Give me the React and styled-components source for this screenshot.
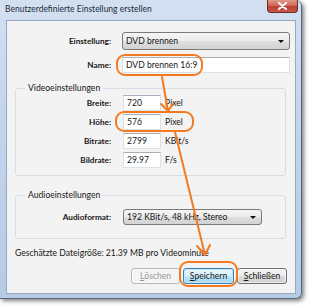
import React from 'react';
import styled, { createGlobalStyle } from 'styled-components';

const GlobalStyle = createGlobalStyle`
  html, body { margin: 0; padding: 0; background: #fff; }
  body {
    font-family: Lato, "Liberation Sans", sans-serif;
    font-size: 8.6px;
    color: #161616;
  }
`;

const Stage = styled.div`
  position: relative;
  width: 309px;
  height: 305px;
  overflow: hidden;
`;

const Window = styled.div`
  width: 302px;
  height: 299px;
  box-sizing: border-box;
  border-right: 1px solid #4f6480;
  border-bottom: 1px solid #4f6480;
  border-radius: 0 6px 6px 0;
  background: linear-gradient(180deg, #d3e0f1 0%, #c3d5eb 40%, #b7cbe5 100%);
  box-shadow: 2px 2px 4px rgba(0, 0, 0, 0.5);
  display: flex;
  flex-direction: column;
  padding: 0 5px 4px 6px;
`;

const TitleBar = styled.div`
  height: 20px;
  display: flex;
  align-items: flex-start;
  justify-content: space-between;
`;

const Title = styled.span`
  margin: 4px 0 0 -1px;
  font-size: 8.5px;
  color: #1e2a3a;
`;

const CloseButton = styled.div`
  width: 31px;
  height: 13px;
  margin-right: -2px;
  box-sizing: border-box;
  border: 1px solid #6b2a24;
  border-top: none;
  border-radius: 0 0 4px 4px;
  background: linear-gradient(180deg, #e2998c 0%, #d0685a 45%, #bb3f31 55%, #c5594b 100%);
  display: flex;
  align-items: center;
  justify-content: center;
`;

const Client = styled.div`
  flex: 1;
  box-sizing: border-box;
  border: 1px solid #94a9c4;
  background: #f3f3f3;
  padding: 11px 5px 0 8px;
  display: flex;
  flex-direction: column;
`;

const FormRow = styled.div`
  display: grid;
  grid-template-columns: ${p => p.$label || 96}px 1fr;
  column-gap: ${p => p.$gap || 11}px;
  align-items: center;
  margin-top: ${p => p.$top || 0}px;
`;

const Label = styled.span`
  text-align: right;
  font-weight: 700;
  font-size: 8.2px;
  color: #161616;
`;

const Combo = styled.div`
  height: ${p => p.$h || 18}px;
  width: ${p => (p.$w ? `${p.$w}px` : 'auto')};
  box-sizing: border-box;
  border: 1px solid #7a7a7a;
  border-radius: 3px;
  background: linear-gradient(180deg, #f5f5f5 0%, #ececec 48%, #dedede 52%, #d3d3d3 100%);
  display: flex;
  align-items: center;
  justify-content: space-between;
  padding: 0 5px 0 3px;
`;

const Caret = styled.span`
  width: 0;
  height: 0;
  border-left: 3px solid transparent;
  border-right: 3px solid transparent;
  border-top: 3px solid #111;
`;

const TextBox = styled.div`
  height: 16px;
  width: ${p => (p.$w ? `${p.$w}px` : 'auto')};
  box-sizing: border-box;
  border: 1px solid #dbe1e8;
  border-top-color: #abadb3;
  background: #fff;
  display: flex;
  align-items: center;
  padding: 0 3px;
`;

const Group = styled.fieldset`
  margin: ${p => p.$top}px 4px 0 0;
  border: 1px solid #d3dde6;
  border-radius: 3px;
  padding: ${p => p.$pad};
  display: flex;
  flex-direction: column;
  gap: 3px;
`;

const Legend = styled.legend`
  margin-left: 9px;
  padding: 0 3px;
  line-height: 10px;
  color: #161616;
`;

const FieldWithUnit = styled.div`
  display: flex;
  align-items: center;
  gap: 4px;
`;

const Info = styled.div`
  margin-top: 9px;
  line-height: 10px;
`;

const ButtonBar = styled.div`
  display: flex;
  justify-content: flex-end;
  gap: 3px;
  margin: 10px 3px 0 0;
`;

const Button = styled.div`
  width: ${p => p.$w}px;
  height: 16px;
  box-sizing: border-box;
  border-radius: 3px;
  display: flex;
  align-items: center;
  justify-content: center;
  border: 1px solid ${p => (p.$variant === 'default' ? '#3c7fb1' : p.$variant === 'disabled' ? '#b5b8bb' : '#707070')};
  color: ${p => (p.$variant === 'disabled' ? '#9a9a9a' : '#161616')};
  background: ${p =>
    p.$variant === 'default'
      ? 'linear-gradient(180deg, #eaf6fd 0%, #d9f0fc 48%, #bee6fd 52%, #a7d9f5 100%)'
      : p.$variant === 'disabled'
      ? '#f4f4f4'
      : 'linear-gradient(180deg, #f2f2f2 0%, #ebebeb 48%, #dddddd 52%, #cfcfcf 100%)'};
  box-shadow: ${p => (p.$variant === 'default' ? 'inset 0 0 0 1px #c6e6f8' : 'inset 0 0 0 1px rgba(255,255,255,0.6)')};
`;

const Overlay = styled.svg`
  position: absolute;
  inset: 0;
  pointer-events: none;
`;

const ORANGE = '#f47a22';

const videoRows = [
  { label: 'Breite:', value: '720', unit: 'Pixel' },
  { label: 'Höhe:', value: '576', unit: 'Pixel' },
  { label: 'Bitrate:', value: '2799', unit: 'KBit/s' },
  { label: 'Bildrate:', value: '29.97', unit: 'F/s' },
];

export default function App() {
  return (
    <Stage>
      <GlobalStyle />
      <Window>
        <TitleBar>
          <Title>Benutzerdefinierte Einstellung erstellen</Title>
          <CloseButton>
            <svg width="9" height="8" viewBox="0 0 9 8">
              <path d="M1 1 L8 7 M8 1 L1 7" stroke="#fff" strokeWidth="2" strokeLinecap="round" />
            </svg>
          </CloseButton>
        </TitleBar>
        <Client>
          <FormRow>
            <Label>Einstellung:</Label>
            <Combo>
              <span>DVD brennen</span>
              <Caret />
            </Combo>
          </FormRow>
          <FormRow $top={7}>
            <Label>Name:</Label>
            <TextBox>DVD brennen 16:9</TextBox>
          </FormRow>

          <Group $top={10} $pad="2px 0 7px 0">
            <Legend>Videoeinstellungen</Legend>
            {videoRows.map(r => (
              <FormRow key={r.label} $label={95} $gap={12}>
                <Label>{r.label}</Label>
                <FieldWithUnit>
                  <TextBox $w={38}>{r.value}</TextBox>
                  <span>{r.unit}</span>
                </FieldWithUnit>
              </FormRow>
            ))}
          </Group>

          <Group $top={14} $pad="9px 0 13px 0">
            <Legend>Audioeinstellungen</Legend>
            <FormRow $label={95} $gap={12}>
              <Label>Audioformat:</Label>
              <Combo $h={16} $w={139}>
                <span>192 KBit/s, 48 kHz, Stereo</span>
                <Caret />
              </Combo>
            </FormRow>
          </Group>

          <Info>Geschätzte Dateigröße: 21.39 MB pro Videominute</Info>

          <ButtonBar>
            <Button $w={49} $variant="disabled"><u>L</u>öschen</Button>
            <Button $w={51} $variant="default"><u>S</u>peichern</Button>
            <Button $w={50}><u>S</u>chließen</Button>
          </ButtonBar>
        </Client>
      </Window>

      <Overlay width="309" height="305" viewBox="0 0 309 305">
        <g fill="none" stroke={ORANGE} strokeWidth="2" strokeLinecap="round" strokeLinejoin="round">
          <rect x="117" y="55" width="85" height="20" rx="8" />
          <rect x="116" y="112" width="77" height="19" rx="8" />
          <rect x="180" y="262" width="57" height="24" rx="8" />
          <path d="M162 77 L168 111 M161 104 L168 111 L173 104" />
          <path d="M175 132 L205 255 M197 246 L205 255 L210 245" />
        </g>
      </Overlay>
    </Stage>
  );
}
